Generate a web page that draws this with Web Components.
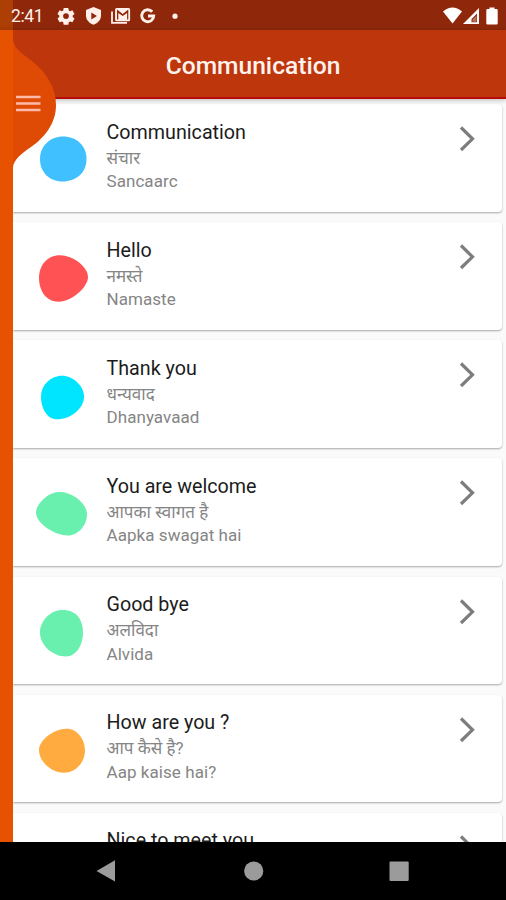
<!DOCTYPE html>
<html lang="en">
<head>
<meta charset="utf-8">
<title>Communication</title>
<style>
html, body { margin: 0; height: 100%; overflow: hidden; background: #fafafa; font-family: Roboto, "Noto Sans", "Open Sans", sans-serif; }
</style>
</head>
<body>
<phrase-app></phrase-app>
<script>
class StatusBar extends HTMLElement {
  constructor() {
    super();
    this.attachShadow({ mode: 'open' }).innerHTML = `
      <style>
        :host { display: flex; align-items: center; height: 30px; flex: none; box-sizing: border-box; padding: 2px 8px 0 11px; background: linear-gradient(90deg, #ad3e04 13px, #8f280b 13px); color: #fff0ea; }
        .time { font-size: 17.5px; line-height: 28px; width: 46px; letter-spacing: -.35px; }
        svg { display: block; flex: none; fill: currentColor; }
        .gap { flex: 1; }
        .end { color: #fff; }
      </style>
      <span class="time">2:41</span>
      <svg width="130" height="28" viewBox="57 1 130 28">
        <path fill-rule="evenodd" d="M63.7 7h4.6l.5 2.4 1.3.8 2.3-.9 2.1 3.7-1.8 1.6v1.4l1.8 1.6-2.1 3.6-2.3-.8-1.3.8-.5 2.5h-4.6l-.5-2.5-1.3-.8-2.3.8-2.1-3.6 1.8-1.6v-1.4L57.500 13l2.1-3.700 2.300.9 1.300-.8zM66 12.200a2.900 2.900 0 1 0 0 5.800 2.900 2.900 0 0 0 0-5.800z"/>
        <path fill-rule="evenodd" d="M93.500 6l7.500 2.900v5.600c0 4.300-3 7.600-7.500 9.200-4.500-1.600-7.500-4.900-7.500-9.200V8.900zM91.300 11.500v7l5.700-3.500z"/>
        <path fill-rule="evenodd" d="M116.600 7h12a1.500 1.500 0 0 1 1.500 1.500v10.300a1.500 1.500 0 0 1-1.500 1.500h-12a1.500 1.500 0 0 1-1.500-1.500V8.500a1.500 1.500 0 0 1 1.500-1.500zM117 8.400v10.200h1.300v-6.700l4.400 3.200 4.400-3.200v6.700h1.200V8.400l-5.600 4.600z"/>
        <path d="M112 10.500v11.300h15" fill="none" stroke="currentColor" stroke-width="1.800"/>
        <path d="M152.200 10.800a6 6 0 1 0 1.500 4.200h-5.700" fill="none" stroke="currentColor" stroke-width="2.900"/>
        <circle cx="175" cy="15.200" r="2.600"/>
      </svg>
      <span class="gap"></span>
      <svg class="end" width="56" height="28" viewBox="442 1 56 28">
        <path d="M443 10.500q9.500-8 19 0L452.500 22.500z"/>
        <path fill-rule="evenodd" d="M479 7v16h-16zM477 12.500l-5.500 5.500v3.200h5.500z"/>
        <path fill-opacity=".35" d="M472.500 18.500l4-4v6.200h-4z"/>
        <path d="M489.500 6.500h5v1.500h2q1.200 0 1.200 1.200v13q0 1.300-1.200 1.300h-9q-1.200 0-1.200-1.300v-13q0-1.200 1.200-1.200h2z"/>
      </svg>`;
  }
}
class AppHeader extends HTMLElement {
  constructor() {
    super();
    this.attachShadow({ mode: 'open' }).innerHTML = `
      <style>
        :host { display: flex; flex: none; height: 69px; box-sizing: border-box; align-items: center; justify-content: center; background: #be360c; border-bottom: 2px solid #b80b08; color: #fff3ee; box-shadow: 0 1px 5px #0004; position: relative; z-index: 1; }
        h1 { margin: 4px 0 0; font-size: 24.6px; line-height: 28px; font-weight: 500; }
      </style>
      <h1><slot></slot></h1>`;
  }
}
class PhraseCard extends HTMLElement {
  constructor() {
    super();
    this.attachShadow({ mode: 'open' }).innerHTML = `
      <style>
        :host { display: flex; flex: none; height: 107.65px; margin-bottom: 10.500px; background: #fff; border-radius: 0 4px 4px 0; box-shadow: 0 1px 2px #0005; }
        .blob { width: 94px; height: 108px; flex: none; }
        .copy { flex: 1; padding-top: 15.500px; margin-left: -.5px; white-space: nowrap; }
        .copy > * { display: block; width: max-content; }
        .title { font-size: 19.700px; line-height: 26px; color: #1c1c1c; }
        .hindi { font-size: 17px; line-height: 24px; height: 23.500px; color: #858585; }
        .latin { font-size: 17px; line-height: 24px; color: #858585; letter-spacing: .06px; }
        .arrow { width: 22px; height: 30px; margin: 20px 24px 0 0; flex: none; fill: none; stroke: #7d7d7d; stroke-width: 3.200; }
      </style>
      <svg class="blob"><path/></svg>
      <div class="copy"></div>
      <svg class="arrow" viewBox="0 0 22 30"><path d="M5 3.500l11.500 11.300L5 26"/></svg>`;
  }
  connectedCallback() {
    const root = this.shadowRoot;
    const copy = root.querySelector('.copy');
    for (const k of ['title', 'hindi', 'latin']) {
      if (!this.dataset[k]) continue;
      const line = document.createElement('span');
      line.className = k;
      line.textContent = this.dataset[k];
      copy.append(line);
    }
    root.querySelector('.blob').setAttribute('viewBox', `13 ${this.dataset.top} 94 108`);
    const p = root.querySelector('.blob path');
    p.setAttribute('d', this.dataset.shape);
    p.setAttribute('fill', this.dataset.color);
  }
}
class SideRail extends HTMLElement {
  constructor() {
    super();
    this.attachShadow({ mode: 'open' }).innerHTML = `
      <style>
        :host { position: absolute; left: 0; top: 30px; z-index: 2; pointer-events: none; }
        svg { display: block; }
      </style>
      <svg width="60" height="812" viewBox="0 30 60 812">
        <path fill="#e65200" d="M0 30H13V842H0z"/>
        <path fill="#df4b05" d="M13 40C15 50 24 55 32 61C47 73 56 88 56 105C56 124 44 138 31 147C22 153 13 160 13 168z"/>
        <path d="M16 97h24.500M16 103.500h24.500M16 110h24.500" stroke="#ffb9a8" stroke-width="2.700"/>
      </svg>`;
  }
}
class NavBar extends HTMLElement {
  constructor() {
    super();
    this.attachShadow({ mode: 'open' }).innerHTML = `
      <style>
        :host { display: block; flex: none; height: 58px; background: #000; position: relative; z-index: 3; }
        svg { display: block; fill: #9b9b9b; }
      </style>
      <svg width="506" height="58" viewBox="0 842 506 58">
        <path d="M96.500 871L115 860.300V881.500z"/>
        <circle cx="253.700" cy="871" r="9.600"/>
        <rect x="389.500" y="861.500" width="19.200" height="19.500" rx="1"/>
      </svg>`;
  }
}
const phrases = [
  ['Communication', 'संचार', 'Sancaarc', '#40c0ff', 'M63 136.500C77 136.500 86.500 146 86.500 159C86.500 173 76 181.500 62.500 181.500C49 181.500 40 172 40 159C40 146 50 136.500 63 136.500z'],
  ['Hello', 'नमस्ते', 'Namaste', '#ff5254', 'M60 255.500C73 255.500 88 267 88 277.500C88 287 72 302 58.500 302C46 302 39 291 39 278C39 266 47 255.500 60 255.500z'],
  ['Thank you', 'धन्यवाद', 'Dhanyavaad', '#00e5ff', 'M62 376C73 376 84 386 84 397C84 409 70 420 56 419.500C46 419 41 407 41 397C41 385 51 376 62 376z'],
  ['You are welcome', 'आपका स्वागत है', 'Aapka swagat hai', '#69f0ae', 'M59 492.500C71 492 87 503 87 515C87 526 78 536 68 536C55 536 36 524 36 513C36 505 48 492.500 59 492.500z'],
  ['Good bye', 'अलविदा', 'Alvida', '#69f0ae', 'M62 609.500C76 609 83 619 83 632C83 645 76 656 66 656C53 656 40 645 40 632C40 620 51 609.500 62 609.500z'],
  ['How are you ?', 'आप कैसे है?', 'Aap kaise hai?', '#ffab40', 'M66 728.500C77 728 85 739 85 750C85 762 76 772.500 64 772.500C51 772.500 39 761 39 750C39 740 54 728.500 66 728.500z'],
  ['Nice to meet you', '', '', '#40c0ff', 'M63 846C77 846 86.500 855 86.500 868C86.500 882 76 891 62.500 891C49 891 40 882 40 868C40 855 50 846 63 846z']
];
class PhraseApp extends HTMLElement {
  constructor() {
    super();
    this.attachShadow({ mode: 'open' }).innerHTML = `
      <style>
        :host { display: flex; flex-direction: column; width: 506px; height: 900px; overflow: hidden; position: relative; background: #fafafa; }
        main { flex: 1; min-height: 0; overflow: hidden; display: flex; flex-direction: column; padding: 5px 4px 0 13px; }
      </style>
      <status-bar></status-bar>
      <app-header>Communication</app-header>
      <main></main>
      <nav-bar></nav-bar>
      <side-rail></side-rail>`;
    const main = this.shadowRoot.querySelector('main');
    phrases.forEach(([title, hindi, latin, color, shape], i) => {
      const card = document.createElement('phrase-card');
      Object.assign(card.dataset, { title, hindi, latin, color, shape, top: (104 + i * 118.15).toFixed(2) });
      main.append(card);
    });
  }
}
customElements.define('status-bar', StatusBar);
customElements.define('app-header', AppHeader);
customElements.define('phrase-card', PhraseCard);
customElements.define('side-rail', SideRail);
customElements.define('nav-bar', NavBar);
customElements.define('phrase-app', PhraseApp);
</script>
</body>
</html>
